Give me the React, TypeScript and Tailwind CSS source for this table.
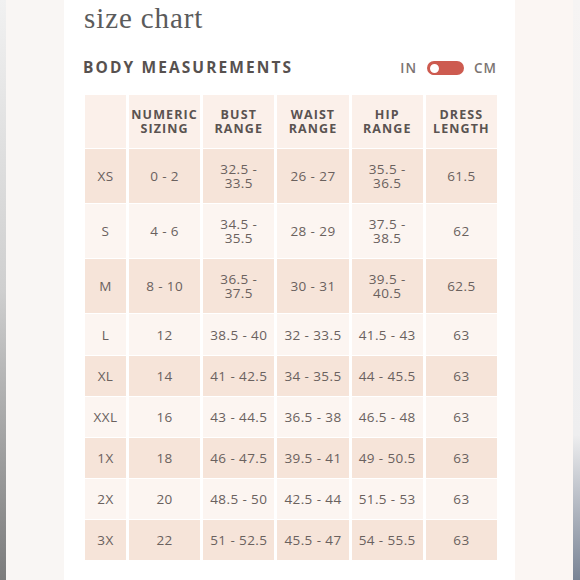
import React from 'react';

type Row = {
  size: string;
  numeric: string;
  bust: string;
  waist: string;
  hip: string;
  length: string;
};

const rows: Row[] = [
  { size: 'XS', numeric: '0 - 2', bust: '32.5 -\n33.5', waist: '26 - 27', hip: '35.5 -\n36.5', length: '61.5' },
  { size: 'S', numeric: '4 - 6', bust: '34.5 -\n35.5', waist: '28 - 29', hip: '37.5 -\n38.5', length: '62' },
  { size: 'M', numeric: '8 - 10', bust: '36.5 -\n37.5', waist: '30 - 31', hip: '39.5 -\n40.5', length: '62.5' },
  { size: 'L', numeric: '12', bust: '38.5 - 40', waist: '32 - 33.5', hip: '41.5 - 43', length: '63' },
  { size: 'XL', numeric: '14', bust: '41 - 42.5', waist: '34 - 35.5', hip: '44 - 45.5', length: '63' },
  { size: 'XXL', numeric: '16', bust: '43 - 44.5', waist: '36.5 - 38', hip: '46.5 - 48', length: '63' },
  { size: '1X', numeric: '18', bust: '46 - 47.5', waist: '39.5 - 41', hip: '49 - 50.5', length: '63' },
  { size: '2X', numeric: '20', bust: '48.5 - 50', waist: '42.5 - 44', hip: '51.5 - 53', length: '63' },
  { size: '3X', numeric: '22', bust: '51 - 52.5', waist: '45.5 - 47', hip: '54 - 55.5', length: '63' },
];

const headers = ['', 'NUMERIC\nSIZING', 'BUST\nRANGE', 'WAIST\nRANGE', 'HIP\nRANGE', 'DRESS\nLENGTH'];

const cellText = "font-['Open_Sans',sans-serif] text-[13.5px] leading-[14px] tracking-[0.4px] text-[#6a615e] font-medium whitespace-pre-line text-center";

const App: React.FC = () => {
  return (
    <div className="w-[580px] h-[580px] flex overflow-hidden bg-white">
      <div className="w-[6px] h-full bg-gradient-to-b from-[#f1f1f1] via-[#cfcfcf] to-[#7c7c7c]" />
      <div className="w-[58px] h-full bg-[#f9f6f4]" />

      <div className="w-[451px] h-full bg-white pl-[21px] flex flex-col">
        <div className="h-[34px] pt-[2px]">
          <h1 className="font-['Liberation_Serif',serif] text-[29px] leading-[32px] tracking-[0.9px] text-[#5b5b5b] -ml-[1px]">
            size chart
          </h1>
        </div>

        <div className="mt-[20px] h-[28px] w-[412px] flex items-center justify-between">
          <h2 className="-ml-[2px] font-['Open_Sans',sans-serif] font-bold text-[15.5px] tracking-[2.1px] text-[#57514f]">
            BODY MEASUREMENTS
          </h2>
          <div className="flex items-center gap-[10px] font-['Open_Sans',sans-serif] font-semibold text-[13.5px] tracking-[1px] text-[#7b7472]">
            <span>IN</span>
            <div className="w-[37px] h-[14px] rounded-full bg-[#cd5b50] flex items-center p-[1.5px]">
              <div className="w-[13px] h-[13px] -ml-[1px] rounded-full bg-white border-[2px] border-[#cd5b50]" />
            </div>
            <span>CM</span>
          </div>
        </div>

        <div className="mt-[13px] w-[412px] flex flex-col gap-y-[1px]">
          <div className="grid grid-cols-[41px_repeat(5,1fr)] gap-x-[3px] h-[53px]">
            {headers.map((h, i) => (
              <div key={i} className="bg-[#fbf0ea] flex items-center justify-center">
                <span className="font-['Open_Sans',sans-serif] font-bold text-[12.5px] leading-[13.5px] tracking-[1.1px] text-[#5a5351] whitespace-pre-line text-center">
                  {h}
                </span>
              </div>
            ))}
          </div>

          {rows.map((r, i) => {
            const dark = i % 2 === 0;
            const bg = dark ? 'bg-[#f6e4d9]' : 'bg-[#fcf5f1]';
            const height = i < 3 ? 'h-[54px]' : i === 3 ? 'h-[41px]' : 'h-[40px]';
            const values = [r.size, r.numeric, r.bust, r.waist, r.hip, r.length];
            return (
              <div key={r.size} className={`grid grid-cols-[41px_repeat(5,1fr)] gap-x-[3px] ${height}`}>
                {values.map((v, j) => (
                  <div key={j} className={`${bg} flex items-center justify-center`}>
                    <span className={cellText}>{v}</span>
                  </div>
                ))}
              </div>
            );
          })}
        </div>
      </div>

      <div className="w-[58px] h-full bg-[#fbf6f3]" />
      <div className="w-[7px] h-full bg-gradient-to-b from-[#f6f4f3] via-[#eeeeef] via-[75%] to-[#7a8495]" />
    </div>
  );
};

export default App;
